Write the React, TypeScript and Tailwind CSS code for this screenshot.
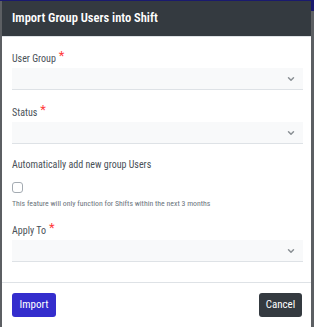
import React from 'react';
import { ChevronDown } from 'lucide-react';

const font = { fontFamily: '"Roboto Condensed", "Open Sans Condensed", Roboto, sans-serif' };

function Label({ text, required }: { text: string; required?: boolean }) {
  return (
    <div className="h-[14px] text-[10px] leading-[14px] text-[#495057]">
      {text}
      {required && <span className="text-[#ff3b3b] text-[13px] ml-[3px] relative top-[-2px]">*</span>}
    </div>
  );
}

function Select() {
  return (
    <div className="h-[22px] bg-[#f8f9fa] border-b border-[#dee2e6] flex items-center justify-end pr-[7px]">
      <ChevronDown className="w-[10px] h-[10px] text-[#8a8f94]" strokeWidth={3.5} />
    </div>
  );
}

export default function App() {
  return (
    <div className="w-[314px] h-[327px] bg-[#5c5f63] border-t border-[#1a1a6e] flex overflow-hidden" style={font}>
      <div className="ml-[2px] w-[309px] h-full bg-white flex flex-col">
        <div className="h-[36px] shrink-0 bg-[#343a40] border-b border-[#dee2e6] flex items-center px-[10px]">
          <span className="text-white text-[12.5px] font-semibold">Import Group Users into Shift</span>
        </div>
        <div className="pl-[10px] pr-[8px] pt-[14px] flex flex-col">
          <Label text="User Group" required />
          <div className="mt-[3px]"><Select /></div>
          <div className="mt-[15px]"><Label text="Status" required /></div>
          <div className="mt-[3px]"><Select /></div>
          <div className="mt-[14px]"><Label text="Automatically add new group Users" /></div>
          <div className="mt-[10px] w-[11px] h-[11px] border border-[#a4abb2] rounded-[3px]" />
          <div className="mt-[6px] h-[10px] text-[7.8px] text-[#6c757d] leading-[10px]">
            This feature will only function for Shifts within the next 3 months
          </div>
          <div className="mt-[14px]"><Label text="Apply To" required /></div>
          <div className="mt-[3px]"><Select /></div>
        </div>
        <div className="mt-[20px] border-t border-[#dee2e6] flex justify-between pl-[10px] pr-[9px] pt-[10px]">
          <button className="h-[24px] w-[44px] rounded-[3px] bg-[#342dcd] text-white text-[11px]">Import</button>
          <button className="h-[24px] w-[43px] rounded-[3px] bg-[#343a40] text-white text-[11px]">Cancel</button>
        </div>
      </div>
      <div className="flex-1 flex flex-col">
        <div className="h-[10px] bg-[#1a1a6e]" />
      </div>
    </div>
  );
}
